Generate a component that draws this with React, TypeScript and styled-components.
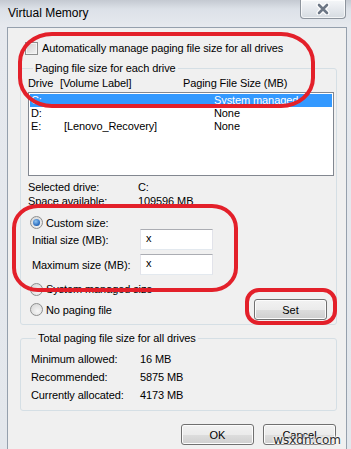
import React from "react";
import styled, { createGlobalStyle } from "styled-components";

const GlobalStyle = createGlobalStyle`
  html, body {
    margin: 0;
    padding: 0;
    background: #e2e6ec;
  }
  body {
    font-family: "Liberation Sans", Arial, sans-serif;
    font-size: 11px;
    letter-spacing: -0.1px;
    color: #000;
  }
`;

const Window = styled.div`
  position: relative;
  width: 351px;
  height: 449px;
  overflow: hidden;
  display: flex;
  flex-direction: column;
  background: linear-gradient(#c4c9d1 0px, #dce1e8 9px, #e6e9ee 26px, #e3e7ec 100%);
`;

const TitleBar = styled.div`
  height: 27px;
  flex: none;
  display: flex;
  align-items: flex-start;
  justify-content: space-between;
  padding-left: 8px;
`;

const Title = styled.span`
  margin-top: 6px;
  line-height: 14px;
  font-size: 12px;
  letter-spacing: 0;
`;

const CloseButton = styled.div`
  width: 44px;
  height: 18px;
  margin-right: 5px;
  border: 1px solid #8d949d;
  border-top: none;
  border-radius: 0 0 4px 4px;
  background: linear-gradient(#f5f7f9, #e2e6eb 60%, #d6dbe1);
  box-shadow: inset 0 0 0 1px rgba(255, 255, 255, 0.7);
  display: flex;
  align-items: center;
  justify-content: center;
`;

const Client = styled.div`
  flex: 1;
  margin: 0 4px 0 7px;
  border: 1px solid #95a0ad;
  border-bottom: none;
  background: #f0f0f0;
  display: flex;
  flex-direction: column;
  padding: 13px 9px 0 12px;
  white-space: nowrap;
`;

const CheckRow = styled.label`
  display: flex;
  align-items: center;
  gap: 4px;
  height: 14px;
  line-height: 14px;
  padding-left: 5px;
`;

const CheckBox = styled.span`
  width: 11px;
  height: 11px;
  border: 1px solid #8e8f8f;
  background: linear-gradient(135deg, #cfcfcf, #f4f4f4);
  box-shadow: inset 0 0 0 1px #f4f4f4;
`;

const Group = styled.fieldset<{ $pad: string; $top: number }>`
  margin: ${(p) => p.$top}px 0 0 0;
  padding: ${(p) => p.$pad};
  border: 1px solid #d5dfe5;
  border-radius: 3px;
  min-width: 0;
`;

const Legend = styled.legend`
  padding: 0 2px;
  margin-left: 5px;
  line-height: 14px;
`;

const ColumnHeader = styled.div`
  display: grid;
  grid-template-columns: 32px 123px 1fr;
  height: 14px;
  line-height: 14px;
`;

const DriveList = styled.div`
  margin-top: 2px;
  height: 80px;
  border: 1px solid #828790;
  background: #fff;
  padding: 1px;
`;

const DriveRow = styled.div<{ $selected?: boolean }>`
  display: grid;
  grid-template-columns: 33px 150px 1fr;
  height: 13px;
  line-height: 13px;
  padding-left: 1px;
  background: ${(p) => (p.$selected ? "#3399ff" : "transparent")};
  color: ${(p) => (p.$selected ? "#fff" : "#000")};
`;

const InfoRow = styled.div<{ $col: number; $h: number; $top?: number }>`
  display: grid;
  grid-template-columns: ${(p) => p.$col}px 1fr;
  height: ${(p) => p.$h}px;
  line-height: ${(p) => p.$h}px;
  margin-top: ${(p) => p.$top ?? 0}px;
`;

const RadioRow = styled.label<{ $top: number; $h: number }>`
  display: flex;
  align-items: center;
  gap: 3px;
  height: ${(p) => p.$h}px;
  margin-top: ${(p) => p.$top}px;
  padding-left: 2px;
  line-height: 14px;
`;

const Radio = styled.span<{ $checked?: boolean }>`
  position: relative;
  width: 11px;
  height: 11px;
  border-radius: 50%;
  border: 1px solid #8e8f8f;
  background: radial-gradient(circle at 60% 65%, #f6f6f6, #d2d2d2);

  &::after {
    content: "";
    display: ${(p) => (p.$checked ? "block" : "none")};
    position: absolute;
    left: 2px;
    top: 2px;
    width: 7px;
    height: 7px;
    border-radius: 50%;
    background: radial-gradient(circle at 40% 35%, #8ec6f5, #2465b8 70%, #1b4f94);
  }
`;

const SizeRow = styled.div<{ $top: number }>`
  display: grid;
  grid-template-columns: 108px 73px;
  align-items: center;
  height: 21px;
  margin-top: ${(p) => p.$top}px;
  padding-left: 4px;
`;

const TextBox = styled.div`
  height: 19px;
  border: 1px solid #abadb3;
  border-left-color: #e2e3ea;
  border-right-color: #e2e3ea;
  border-bottom-color: #e3e9ef;
  background: #fff;
  padding-left: 5px;
  line-height: 17px;
`;

const SplitRow = styled.div`
  display: flex;
  align-items: center;
  justify-content: space-between;
  margin-top: 3px;
  height: 21px;
`;

const Button = styled.button`
  width: 73px;
  height: 21px;
  padding: 0;
  border: 1px solid #707070;
  border-radius: 3px;
  background: linear-gradient(#f2f2f2 0%, #ebebeb 50%, #dddddd 51%, #cfcfcf 100%);
  box-shadow: inset 0 0 0 1px #fcfcfc;
  font-family: inherit;
  font-size: 11px;
  color: #000;
`;

const SetButton = styled(Button)`
  margin-right: 7px;
`;

const ButtonBar = styled.div`
  display: flex;
  justify-content: flex-end;
  gap: 9px;
  margin-top: 13px;
  margin-right: 1px;
`;

const Annotation = styled.div<{
  $x: number;
  $y: number;
  $w: number;
  $h: number;
  $r: string;
}>`
  position: absolute;
  left: ${(p) => p.$x}px;
  top: ${(p) => p.$y}px;
  width: ${(p) => p.$w}px;
  height: ${(p) => p.$h}px;
  border: 4px solid #e3202a;
  border-radius: ${(p) => p.$r};
  box-sizing: border-box;
  pointer-events: none;
`;

const Watermark = styled.span`
  position: absolute;
  right: 10px;
  bottom: 2px;
  font-family: "DejaVu Sans", sans-serif;
  font-size: 12px;
  letter-spacing: 0;
  color: #2b2b2b;
  text-shadow: 0 0 2px #fff, 0 0 2px #fff, 0 0 3px #fff;
`;

const CloseGlyph = () => (
  <svg width="14" height="12" viewBox="0 0 14 12">
    <path d="M3 2 L11 10 M11 2 L3 10" stroke="#fff" strokeWidth="5" strokeLinecap="round" />
    <path d="M3 2 L11 10 M11 2 L3 10" stroke="#6d7785" strokeWidth="2.6" strokeLinecap="round" />
  </svg>
);

export default function App() {
  return (
    <>
      <GlobalStyle />
      <Window>
        <TitleBar>
          <Title>Virtual Memory</Title>
          <CloseButton>
            <CloseGlyph />
          </CloseButton>
        </TitleBar>

        <Client>
          <CheckRow>
            <CheckBox />
            Automatically manage paging file size for all drives
          </CheckRow>

          <Group $pad="1px 2px 4px 7px" $top={6}>
            <Legend>Paging file size for each drive</Legend>
            <ColumnHeader>
              <span>Drive</span>
              <span>[Volume Label]</span>
              <span>Paging File Size (MB)</span>
            </ColumnHeader>
            <DriveList>
              <DriveRow $selected>
                <span>C:</span>
                <span />
                <span>System managed</span>
              </DriveRow>
              <DriveRow>
                <span>D:</span>
                <span />
                <span>None</span>
              </DriveRow>
              <DriveRow>
                <span>E:</span>
                <span>[Lenovo_Recovery]</span>
                <span>None</span>
              </DriveRow>
            </DriveList>

            <InfoRow $col={110} $h={14} $top={4}>
              <span>Selected drive:</span>
              <span>C:</span>
            </InfoRow>
            <InfoRow $col={110} $h={14}>
              <span>Space available:</span>
              <span>109596 MB</span>
            </InfoRow>

            <RadioRow $top={8} $h={13}>
              <Radio $checked />
              Custom size:
            </RadioRow>
            <SizeRow $top={0}>
              <span>Initial size (MB):</span>
              <TextBox>x</TextBox>
            </SizeRow>
            <SizeRow $top={4}>
              <span>Maximum size (MB):</span>
              <TextBox>x</TextBox>
            </SizeRow>
            <RadioRow $top={7} $h={14}>
              <Radio />
              System managed size
            </RadioRow>
            <SplitRow>
              <RadioRow $top={0} $h={14}>
                <Radio />
                No paging file
              </RadioRow>
              <SetButton>Set</SetButton>
            </SplitRow>
          </Group>

          <Group $pad="5px 2px 6px 10px" $top={6}>
            <Legend>Total paging file size for all drives</Legend>
            <InfoRow $col={109} $h={18}>
              <span>Minimum allowed:</span>
              <span>16 MB</span>
            </InfoRow>
            <InfoRow $col={109} $h={18}>
              <span>Recommended:</span>
              <span>5875 MB</span>
            </InfoRow>
            <InfoRow $col={109} $h={18}>
              <span>Currently allocated:</span>
              <span>4173 MB</span>
            </InfoRow>
          </Group>

          <ButtonBar>
            <Button>OK</Button>
            <Button>Cancel</Button>
          </ButtonBar>
        </Client>

        <Annotation $x={18} $y={32} $w={297} $h={76} $r="34px / 30px" />
        <Annotation $x={12} $y={204} $w={226} $h={88} $r="26px / 24px" />
        <Annotation $x={245} $y={288} $w={92} $h={37} $r="14px" />
        <Watermark>wsxdn.com</Watermark>
      </Window>
    </>
  );
}
